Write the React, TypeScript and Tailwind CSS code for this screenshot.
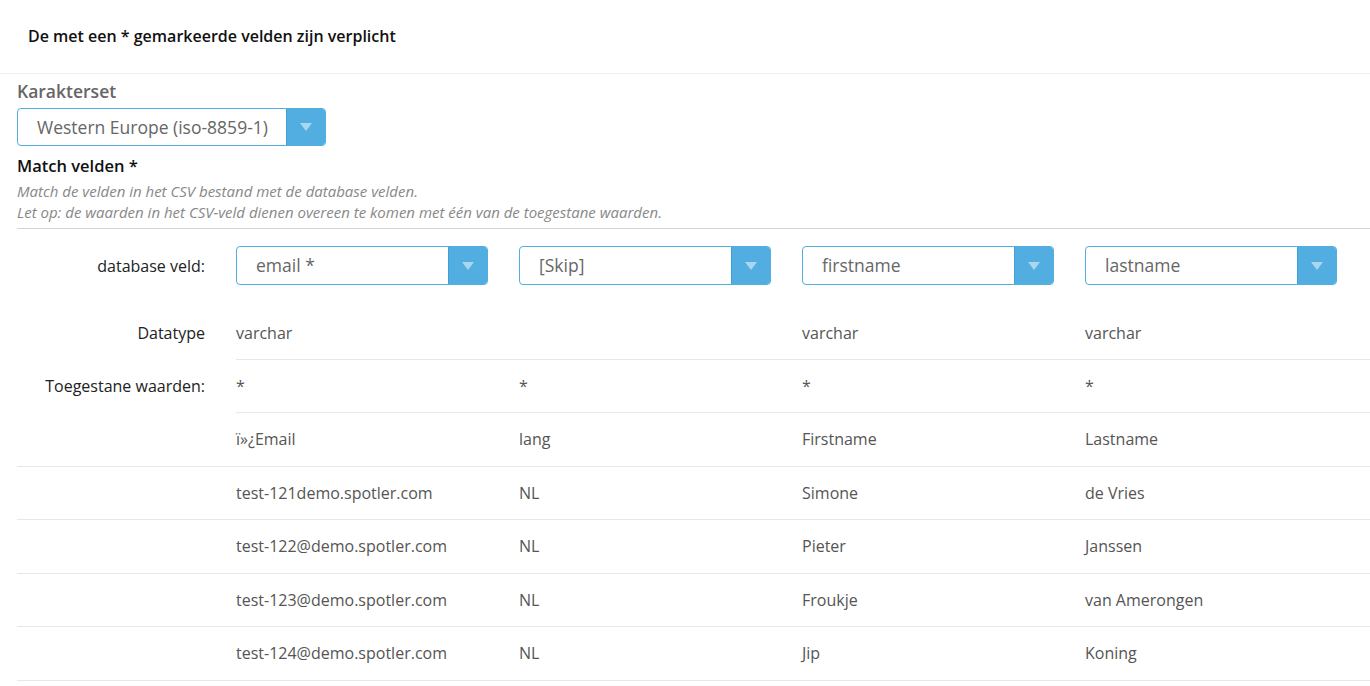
const columns = ["email *", "[Skip]", "firstname", "lastname"];

const datatypes = ["varchar", "", "varchar", "varchar"];

const rows = [
  ["ï»¿Email", "lang", "Firstname", "Lastname"],
  ["test-121demo.spotler.com", "NL", "Simone", "de Vries"],
  ["test-122@demo.spotler.com", "NL", "Pieter", "Janssen"],
  ["test-123@demo.spotler.com", "NL", "Froukje", "van Amerongen"],
  ["test-124@demo.spotler.com", "NL", "Jip", "Koning"],
];

function Select({ value, className }: { value: string; className: string }) {
  return (
    <div
      className={`flex rounded-[4px] border border-[#52aee0] bg-white overflow-hidden ${className}`}
    >
      <div className="flex-1 flex items-center pl-[19px] text-[17.5px] text-[#666] truncate">
        {value}
      </div>
      <div className="w-[39px] flex items-center justify-center bg-[#52aee0] border-l border-[#3f9fd8]">
        <svg width="12" height="8" viewBox="0 0 12 8">
          <path d="M0 0 L12 0 L6 8 Z" fill="#a9d6f1" />
        </svg>
      </div>
    </div>
  );
}

export default function App() {
  return (
    <div
      className="min-h-screen bg-white text-[16px] text-[#222]"
      style={{ fontFamily: '"Open Sans", "Liberation Sans", sans-serif' }}
    >
      {/* Required fields notice */}
      <div className="h-[74px] border-b border-[#f0f0f0] pl-[28px] flex items-center">
        <span className="text-[16px] font-semibold text-[#111] -mt-[1px]">
          De met een * gemarkeerde velden zijn verplicht
        </span>
      </div>

      <div className="pl-[17px]">
        <div className="pt-[5px] text-[17.5px] leading-[24px] font-semibold text-[#666]">
          Karakterset
        </div>
        <Select value="Western Europe (iso-8859-1)" className="mt-[5px] w-[309px] h-[38px]" />

        <div className="mt-[9px] text-[16.5px] leading-[22px] font-semibold text-[#111]">
          Match velden *
        </div>
        <div className="mt-[4px] text-[15px] leading-[21px] italic text-[#888]">
          <div>Match de velden in het CSV bestand met de database velden.</div>
          <div>
            Let op: de waarden in het CSV-veld dienen overeen te komen met één van de toegestane
            waarden.
          </div>
        </div>
        <div className="mt-[5px] border-b border-[#d4d4d4]" />

        {/* database veld */}
        <div className="flex h-[77.5px] pt-[17px]">
          <div className="w-[219px] pr-[31px] text-right h-[39px] flex items-center justify-end text-[#222]">
            database veld:
          </div>
          {columns.map((c) => (
            <div key={c} className="w-[283px] pr-[31px]">
              <Select value={c} className="h-[39px]" />
            </div>
          ))}
        </div>

        {/* Datatype */}
        <div className="flex">
          <div className="w-[219px] pr-[31px] text-right py-[15px] leading-[22px]">Datatype</div>
          <div className="flex-1 flex border-b border-[#e8e8e8]">
            {datatypes.map((d, i) => (
              <div key={i} className="w-[283px] pr-[31px] py-[15px] leading-[22px] text-[#555]">
                {d}
              </div>
            ))}
          </div>
        </div>

        {/* Toegestane waarden */}
        <div className="flex">
          <div className="w-[219px] pr-[31px] text-right py-[15px] leading-[22.5px]">
            Toegestane waarden:
          </div>
          <div className="flex-1 flex border-b border-[#e8e8e8]">
            {columns.map((_, i) => (
              <div key={i} className="w-[283px] pr-[31px] py-[15px] leading-[22.5px] text-[#555]">
                *
              </div>
            ))}
          </div>
        </div>

        {/* CSV rows */}
        {rows.map((r, ri) => (
          <div
            key={ri}
            className={`flex ${ri === 0 ? "" : "border-t border-[#e8e8e8]"} ${
              ri === rows.length - 1 ? "border-b border-[#e8e8e8]" : ""
            }`}
          >
            <div className="w-[219px]" />
            {r.map((v, i) => (
              <div key={i} className="w-[283px] pr-[31px] py-[15px] leading-[22.5px] text-[#555]">
                {v}
              </div>
            ))}
          </div>
        ))}

        <div className="pt-[2px] text-[16px] leading-[22px] font-semibold text-[#111]">
          Geavanceerde import instellingen
        </div>
      </div>
    </div>
  );
}
